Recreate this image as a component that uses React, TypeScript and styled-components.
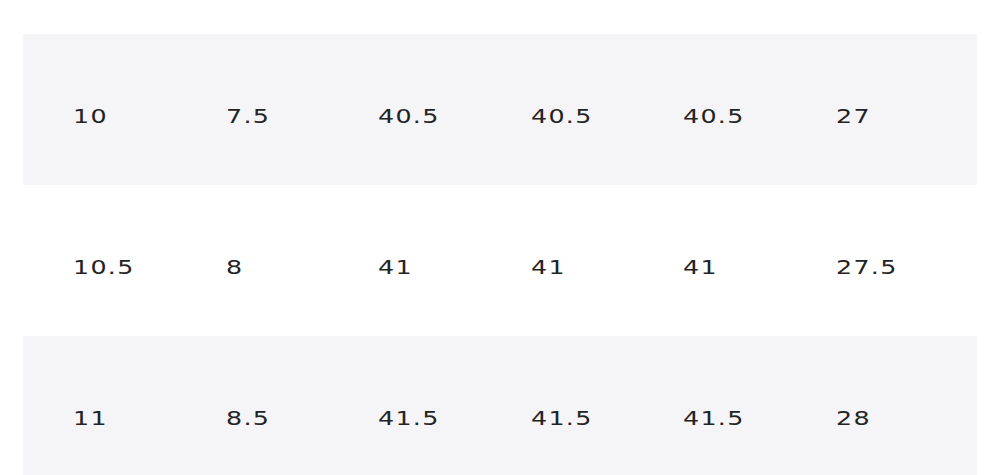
import styled, { createGlobalStyle } from 'styled-components';

const GlobalStyle = createGlobalStyle`
  body {
    margin: 0;
    background: #fff;
  }
`;

const Wrapper = styled.div`
  padding: 34px 23px 0;
  height: 475px;
  box-sizing: border-box;
  overflow: hidden;
`;

const Table = styled.div`
  display: flex;
  flex-direction: column;
`;

const Row = styled.div<{ $shaded: boolean }>`
  display: grid;
  grid-template-columns: repeat(5, 152.6px) 1fr;
  align-items: center;
  height: 151px;
  padding: 13px 0 0 50px;
  box-sizing: border-box;
  background: ${({ $shaded }) => ($shaded ? '#f5f5f7' : '#fff')};
`;

// wide geometric face in the original; stretch DejaVu to match its width
const Cell = styled.div`
  font-family: 'DejaVu Sans', sans-serif;
  font-size: 19.5px;
  letter-spacing: 1px;
  color: #232323;
  transform: scaleX(1.3);
  transform-origin: left center;
`;

const rows = [
  ['10', '7.5', '40.5', '40.5', '40.5', '27'],
  ['10.5', '8', '41', '41', '41', '27.5'],
  ['11', '8.5', '41.5', '41.5', '41.5', '28'],
];

const App = () => (
  <Wrapper>
    <GlobalStyle />
    <Table>
      {rows.map((row, i) => (
        <Row key={i} $shaded={i % 2 === 0}>
          {row.map((value, j) => (
            <Cell key={j}>{value}</Cell>
          ))}
        </Row>
      ))}
    </Table>
  </Wrapper>
);

export default App;
